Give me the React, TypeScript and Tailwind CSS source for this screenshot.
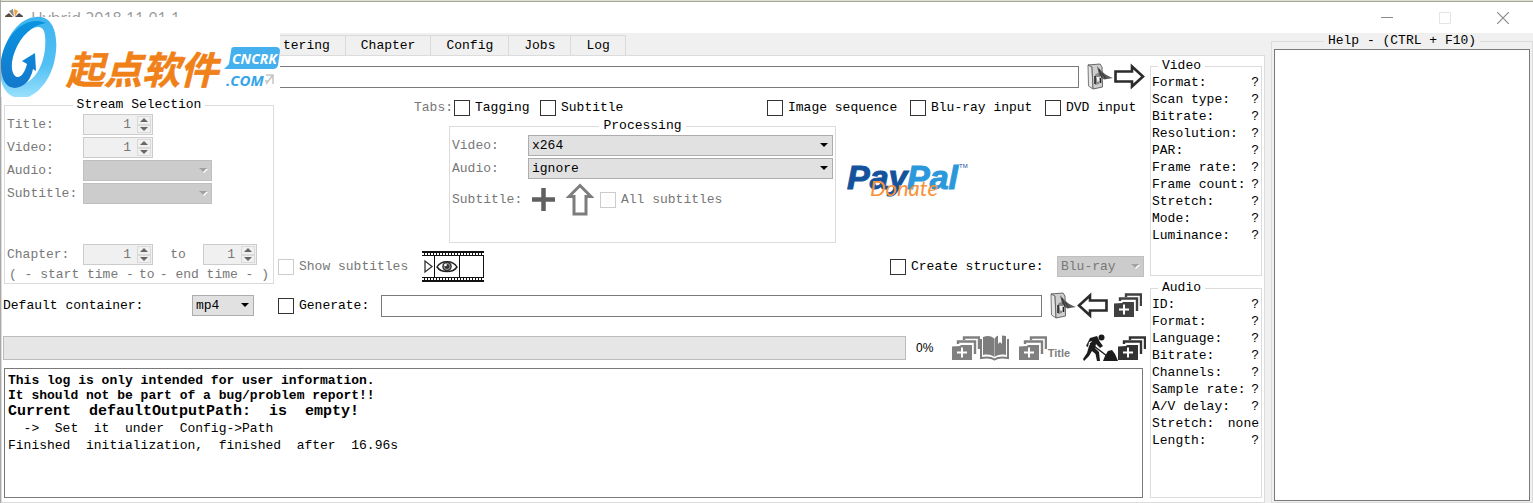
import type { ReactNode } from 'react'
import clsx from 'clsx'

const TABS = ['Chapter', 'Config', 'Jobs', 'Log']

const VIDEO_INFO = [
  ['Format:', '?'],
  ['Scan type:', '?'],
  ['Bitrate:', '?'],
  ['Resolution:', '?'],
  ['PAR:', '?'],
  ['Frame rate:', '?'],
  ['Frame count:', '?'],
  ['Stretch:', '?'],
  ['Mode:', '?'],
  ['Luminance:', '?'],
]

const AUDIO_INFO = [
  ['ID:', '?'],
  ['Format:', '?'],
  ['Language:', '?'],
  ['Bitrate:', '?'],
  ['Channels:', '?'],
  ['Sample rate:', '?'],
  ['A/V delay:', '?'],
  ['Stretch:', 'none'],
  ['Length:', '?'],
]

/* ---------- icons ---------- */

function BrowseIcon() {
  return (
    <svg width="27" height="27" viewBox="0 0 27 27" aria-hidden="true">
      <path d="M1 2 5 3 6 26 1.500 23Z" fill="#e6e6e6" stroke="#777" />
      <path d="M1 2 13 1 15 4 15.500 24 6 26 5 4Z" fill="#cfcfcf" stroke="#666" />
      <path d="M8 12c2-3 5-2 5 1l-1 8-4 1Z" fill="#8a8a8a" />
      <path d="M9.500 14h3v4l-2 1Z" fill="#f4f4f4" />
      <path d="M8 13v8M13.500 15v5" stroke="#222" strokeWidth="1.500" />
      <path d="M10 3C13 7 19 13 26 15L17 16.500 12 12Z" fill="#5a5a5a" />
      <path d="M12 6 15 15M15 10 19 16" stroke="#333" strokeWidth="1" />
    </svg>
  )
}

function ArrowIcon({ left = false }: { left?: boolean }) {
  return (
    <svg width="31" height="27" viewBox="0 0 31 27" aria-hidden="true" className={clsx(left && 'rotate-180')}>
      <path d="M1.500 8.500H18V3.500L29 13.500 18 23.500V18.500H1.500Z" fill="#fff" stroke="#2b2b2b" strokeWidth="2.600" />
    </svg>
  )
}

function StackIcon({ color = '#404040' }: { color?: string }) {
  return (
    <svg width="28" height="25" viewBox="0 0 28 25" aria-hidden="true">
      <path d="M0 10.500 8 10 9 9H20V24H0Z" fill={color} />
      <path d="M10 11.500v10M5 16.500h10" stroke="#fff" strokeWidth="2" />
      <path d="M6 8V5.500H23V18M12 4V1.500H27V13" fill="none" stroke={color} strokeWidth="2.400" />
    </svg>
  )
}

function BookIcon() {
  return (
    <svg width="29" height="26" viewBox="0 0 29 26" aria-hidden="true">
      <path d="M3 2C8 0 12 1 14.500 4 15.500 2 16.500 1 18 .8V9L20 7 22 9V.5L26 1V20C21 19 17 20 14.500 22 12 20 8 19 3 20Z" fill="#7d7d7d" />
      <path d="M1 4V23C7 22 11 22 14.500 24.500 18 22 22 22 28 23V4" fill="none" stroke="#7d7d7d" strokeWidth="2" />
      <path d="M14.500 4V22" stroke="#b0b0b0" strokeWidth="1" />
    </svg>
  )
}

function DiggerIcon() {
  return (
    <svg width="35" height="29" viewBox="0 0 35 29" aria-hidden="true">
      <circle cx="18.500" cy="3.500" r="3" fill="#1c1c1c" />
      <path d="M7 4 14 2 17 8 20 12 17 14 13 10 12 14 16 18 17 27H14L12.500 20 9 17 6 22 1 27 0 25 4 19 6 12 9 7 6 8 5 13 3 12Z" fill="#1c1c1c" />
      <path d="M7 9 24 22" stroke="#1c1c1c" strokeWidth="1.400" />
      <path d="M20 27 22 22 25 17 29 16 32 20 35 27Z" fill="#1c1c1c" />
    </svg>
  )
}

function FilmIcon() {
  return (
    <svg width="62" height="31" viewBox="0 0 62 31" aria-hidden="true">
      <rect width="62" height="31" fill="#111" />
      <path d="M0 3H62M0 28H62" stroke="#fff" strokeWidth="2" strokeDasharray="2 1" />
      <path d="M0 5H12V26H0ZM13 5H37V26H13ZM38 5H61V26H38Z" fill="#fff" />
      <path d="M3 10V21L10 15.500Z" fill="#fff" stroke="#333" strokeWidth="1.300" />
      <path d="M15 16C19 9 31 9 35 16 31 22 19 22 15 16Z" fill="#fff" stroke="#222" strokeWidth="1.500" />
      <circle cx="25" cy="15.500" r="4.800" fill="#333" />
      <circle cx="25" cy="15.500" r="3" fill="none" stroke="#bbb" strokeWidth=".8" />
      <circle cx="23.500" cy="14" r="1.300" fill="#fff" />
    </svg>
  )
}

function PayPalLogo() {
  return (
    <svg width="124" height="52" viewBox="0 -8 124 52" aria-hidden="true">
      <g fontFamily="Liberation Sans, sans-serif" fontWeight="700" fontStyle="italic" fontSize="34" strokeWidth="1">
        <text x="1" y="26" fill="#14529c" stroke="#14529c">Pay</text>
        <text x="61" y="26" fill="#2b98dc" stroke="#2b98dc">Pal</text>
      </g>
      <text x="113" y="5" fontFamily="Liberation Sans, sans-serif" fontSize="6" fill="#14529c">TM</text>
      <text x="24" y="33" fontFamily="Lato, sans-serif" fontStyle="italic" fontSize="22" fill="#f7923a">Donate</text>
    </svg>
  )
}

/* ---------- controls ---------- */

function IconButton({ label, disabled, children }: { label: string; disabled?: boolean; children: ReactNode }) {
  return (
    <button type="button" aria-label={label} disabled={disabled} className="flex shrink-0 items-center">
      {children}
    </button>
  )
}

function Group({ title, align = 'center', className, children }: {
  title: string
  align?: 'center' | 'left'
  className?: string
  children: ReactNode
}) {
  return (
    <fieldset className={clsx('min-w-0 border border-[#dcdcdc]', className)}>
      <legend className={clsx('px-1 leading-4 text-black', align === 'center' ? 'mx-auto' : 'ml-[7px]')}>{title}</legend>
      {children}
    </fieldset>
  )
}

function Check({ label, disabled, className }: { label: string; disabled?: boolean; className?: string }) {
  return (
    <label className={clsx('flex shrink-0 items-center gap-[5px] whitespace-nowrap', disabled && 'text-[#787878]', className)}>
      <input
        type="checkbox"
        disabled={disabled}
        className="size-4 shrink-0 appearance-none border border-[#333] bg-white checked:bg-[#333] disabled:border-[#ccc]"
      />
      {label}
    </label>
  )
}

function Select({ id, label, value, disabled, className }: {
  id: string
  label?: string
  value: string
  disabled?: boolean
  className?: string
}) {
  return (
    <div className={clsx('relative h-[21px]', className)}>
      <select
        id={id}
        aria-label={label}
        disabled={disabled}
        className="block size-full appearance-none border border-[#adadad] bg-[#e1e1e1] pl-[3px] text-black disabled:border-[#bfbfbf] disabled:bg-[#ccc] disabled:text-[#787878] disabled:opacity-100"
      >
        <option>{value}</option>
      </select>
      <svg width="9" height="6" viewBox="0 0 9 6" aria-hidden="true" className="pointer-events-none absolute top-2 right-1">
        {disabled && <path d="M1 1H9L5 5Z" fill="#fff" />}
        <path d="M0 0H8L4 4Z" fill={disabled ? '#a0a0a0' : '#000'} />
      </svg>
    </div>
  )
}

function Spinner({ id, label, className }: { id: string; label?: string; className?: string }) {
  return (
    <div className={clsx('flex h-[21px] shrink-0 border border-[#ccc] bg-[#f0f0f0]', className)}>
      <input
        id={id}
        aria-label={label}
        type="number"
        defaultValue={1}
        disabled
        className="min-w-0 flex-1 bg-transparent pr-[6px] text-right text-[#787878] [appearance:textfield] [&::-webkit-inner-spin-button]:appearance-none"
      />
      <div className="flex w-[15px] flex-col py-px pr-px">
        {['M0 4H8L4 0Z', 'M0 0H8L4 4Z'].map((d, i) => (
          <button
            key={d}
            type="button"
            disabled
            aria-label={i === 0 ? 'Increase' : 'Decrease'}
            className="flex flex-1 items-center justify-center border border-[#dadada]"
          >
            <svg width="8" height="4" viewBox="0 0 8 4" aria-hidden="true">
              <path d={d} fill="#666" />
            </svg>
          </button>
        ))}
      </div>
    </div>
  )
}

function Info({ title, rows }: { title: string; rows: string[][] }) {
  return (
    <Group title={title} align="left" className="flex-1">
      <dl className="pr-[2px] pl-px leading-[17px]">
        {rows.map(([name, value]) => (
          <div key={name} className="flex justify-between whitespace-nowrap">
            <dt>{name}</dt>
            <dd>{value}</dd>
          </div>
        ))}
      </dl>
    </Group>
  )
}

/* ---------- window parts ---------- */

function TitleBar() {
  return (
    <header className="flex h-[31px] shrink-0 items-center bg-white pr-6 pl-1">
      <svg width="18" height="20" viewBox="0 0 18 20" aria-hidden="true">
        <path d="M0 8 4 5 8 9 6 12 1 13Z" fill="#5c4a3a" />
        <path d="M4 3 8 1 9 9Z" fill="#8b8b8b" />
        <path d="M9 1 13 3 10 9Z" fill="#f0a030" />
        <path d="M18 8 14 5 10 9 12 12 17 13Z" fill="#4b4b55" />
      </svg>
      <h1 className="ml-2 font-['Open_Sans',sans-serif] text-base leading-5 text-[#999]">Hybrid 2018.11.01.1</h1>
      <div className="ml-auto flex items-center gap-[46px] text-[#8a8a8a]">
        <button type="button" aria-label="Minimize">
          <svg width="12" height="12" viewBox="0 0 12 12" className="block"><path d="M0 5.500H12" stroke="currentColor" /></svg>
        </button>
        <button type="button" aria-label="Maximize" disabled>
          <svg width="12" height="12" viewBox="0 0 12 12" className="block"><path d="M.5.5h11v11H.5Z" fill="none" stroke="#e4e4e4" /></svg>
        </button>
        <button type="button" aria-label="Close">
          <svg width="12" height="12" viewBox="0 0 12 12" className="block"><path d="M0 0 12 12M12 0 0 12" stroke="currentColor" strokeWidth="1.200" /></svg>
        </button>
      </div>
    </header>
  )
}

// Site badge floating over the top left corner of the window.
function SiteBadge() {
  return (
    <svg width="280" height="82" viewBox="0 0 280 82" className="absolute top-[15px] -left-px z-10" role="img" aria-label="起点软件 CNCRK.COM">
      <defs>
        <linearGradient id="ring" x1="0" y1="0" x2="0" y2="1">
          <stop offset="0" stopColor="#3fb4ee" />
          <stop offset=".6" stopColor="#52c0f4" />
          <stop offset="1" stopColor="#98e0fd" />
        </linearGradient>
        <linearGradient id="swirl" x1="0" y1="0" x2="0" y2="1">
          <stop offset="0" stopColor="#0a94e0" />
          <stop offset="1" stopColor="#1478cc" />
        </linearGradient>
      </defs>
      <rect y="2" width="280" height="80" fill="#fff" />
      <path fillRule="evenodd" d="M36 2C51 0 58 16 56 36 54 58 43 76 28 82H14C4 78 0 68 0 54 3 24 18 3 36 2ZM38 12C26 13 15 29 12 46 9 62 14 69 22 69 34 67 43 52 45 34 46 20 45 12 38 12Z" fill="url(#ring)" />
      <path d="M46 8C24-1 4 22 1 46 0 64 6 73 15 73 25 72 31 64 33 54L36 56 35 38 22 46 27 49C25 57 21 63 17 62 11 60 10 48 15 36 21 21 32 10 46 8Z" fill="url(#swirl)" />
      <text x="66" y="69" fontFamily="Noto Sans CJK SC, sans-serif" fontWeight="700" fontStyle="italic" fontSize="38" fill="#f08018" stroke="#f08018" strokeWidth=".6">起点软件</text>
      <path d="M234 32H276Q280 32 280 36L278 50Q277 54 273 54H224L229 49 231 36Q231 32 234 32Z" fill="#45b0ee" />
      <g fontFamily="Open Sans, sans-serif" fontWeight="700" fontStyle="italic">
        <text x="232" y="49" fontSize="14" fill="#fff">CNCRK</text>
        <text x="226" y="71" fontSize="15" fill="#35a4e8">.COM</text>
      </g>
      <path d="M266 60H273V69M273 60 266 69M265 66H269" fill="none" stroke="#c4c4c4" strokeWidth="1.500" />
    </svg>
  )
}

function StreamSelection() {
  return (
    <Group title="Stream Selection" className="w-[270px] shrink-0 text-[#787878]">
      <div className="grid grid-cols-[76px_1fr] items-center gap-y-[2px] pt-px pl-[2px]">
        <label htmlFor="title">Title:</label>
        <Spinner id="title" className="w-[70px]" />
        <label htmlFor="video">Video:</label>
        <Spinner id="video" className="w-[70px]" />
        <label htmlFor="audio">Audio:</label>
        <Select id="audio" value="" disabled className="w-[129px]" />
        <label htmlFor="subtitle">Subtitle:</label>
        <Select id="subtitle" value="" disabled className="w-[129px]" />
      </div>
      <div className="mt-10 flex items-center pl-[2px]">
        <label htmlFor="chapter" className="w-[76px]">Chapter:</label>
        <Spinner id="chapter" className="w-[70px]" />
        <span className="w-[50px] text-center">to</span>
        <Spinner id="chapterEnd" label="Last chapter" className="w-[54px]" />
      </div>
      <div className="mt-[2px] flex justify-between px-1 leading-4">
        <span>( - start time -</span>
        <span>to</span>
        <span>- end time - )</span>
      </div>
    </Group>
  )
}

function Processing() {
  return (
    <Group title="Processing" className="h-[125px] w-[387px] text-[#787878]">
      <div className="grid grid-cols-[76px_1fr] items-center gap-y-[2px] pt-px pr-[2px] pl-[2px]">
        <label htmlFor="videoCodec">Video:</label>
        <Select id="videoCodec" value="x264" />
        <label htmlFor="audioCodec">Audio:</label>
        <Select id="audioCodec" value="ignore" />
      </div>
      <div className="mt-1 flex items-center pl-[2px]">
        <span className="w-20">Subtitle:</span>
        <IconButton label="Add subtitle" disabled>
          <svg width="23" height="23" viewBox="0 0 23 23" aria-hidden="true">
            <path d="M11.500 0V23M0 11.500H23" stroke="#606060" strokeWidth="4.500" />
          </svg>
        </IconButton>
        <div className="mr-[6px] ml-[11px] flex">
          <IconButton label="Load subtitle" disabled>
            <svg width="28" height="33" viewBox="0 0 28 33" aria-hidden="true">
              <path d="M14 2.500 25 13.500H20V31H8V13.500H3Z" fill="#fff" stroke="#7d7d7d" strokeWidth="3" />
            </svg>
          </IconButton>
        </div>
        <Check label="All subtitles" disabled />
      </div>
    </Group>
  )
}

function Log() {
  return (
    <section aria-label="Log" className="mr-[3px] ml-px min-h-0 flex-1 border border-[#7a7a7a] bg-white px-[3px] py-1 leading-[17px] whitespace-pre">
      <p className="leading-[15px] font-bold">This log is only intended for user information.</p>
      <p className="leading-[15px] font-bold">It should not be part of a bug/problem report!!</p>
      <p className="text-[15px] leading-[17px] font-bold">{'Current  defaultOutputPath:  is  empty!'}</p>
      <p>{'  ->  Set  it  under  Config->Path'}</p>
      <p>{'Finished  initialization,  finished  after  16.96s'}</p>
    </section>
  )
}

function BasePage() {
  return (
    <div className="flex min-w-0 flex-1 flex-col pt-[7px] pl-px">
      <div className="flex items-center pr-px">
        <input aria-label="Input" className="mr-2 h-[22px] min-w-0 flex-1 border border-[#7a7a7a] bg-white px-1" />
        <IconButton label="Open input"><BrowseIcon /></IconButton>
        <IconButton label="Next"><ArrowIcon /></IconButton>
      </div>

      <div className="mt-[7px] flex pl-px">
        <StreamSelection />
        <div className="flex min-w-0 flex-1 flex-col pt-px pl-1">
          <div className="flex h-5 items-center">
            <span className="ml-[130px] w-[45px] text-right text-[#787878]">Tabs:</span>
            <Check label="Tagging" className="w-[87px] pl-px" />
            <Check label="Subtitle" />
            <div className="ml-auto flex">
              <Check label="Image sequence" className="w-[143px]" />
              <Check label="Blu-ray input" className="w-[135px]" />
              <Check label="DVD input" className="w-[101px]" />
            </div>
          </div>
          <div className="flex items-center pl-[171px]">
            <Processing />
            <button type="button" aria-label="Donate with PayPal" className="ml-[10px]"><PayPalLogo /></button>
          </div>
          <div className="mt-auto mb-[2px] flex items-center">
            <Check label="Show subtitles" disabled className="w-[144px]" />
            <IconButton label="Preview" disabled><FilmIcon /></IconButton>
            <Check label="Create structure:" className="ml-auto w-[167px]" />
            <Select id="structure" label="Structure" value="Blu-ray" disabled className="mr-[2px] w-[87px]" />
          </div>
        </div>
      </div>

      <div className="mt-2 flex items-center">
        <label htmlFor="container" className="w-[189px]">Default container:</label>
        <Select id="container" value="mp4" className="mr-6 w-[62px]" />
        <Check label="Generate:" className="w-[103px]" />
        <input aria-label="Output" className="mr-2 h-[22px] min-w-0 flex-1 border border-[#7a7a7a] bg-white px-1" />
        <IconButton label="Choose output"><BrowseIcon /></IconButton>
        <IconButton label="Back"><ArrowIcon left /></IconButton>
        <div className="mr-1 ml-[6px] flex">
          <IconButton label="Add to queue"><StackIcon /></IconButton>
        </div>
      </div>

      <div className="mt-[14px] mb-[5px] flex h-[30px] items-center">
        <div role="progressbar" aria-label="Progress" aria-valuenow={0} className="h-6 flex-1 border border-[#bcbcbc] bg-[#e6e6e6]" />
        <span className="ml-[10px] w-9 font-['Liberation_Sans',sans-serif] text-xs">0%</span>
        <div className="flex">
          <IconButton label="Add chapters" disabled><StackIcon color="#808080" /><BookIcon /></IconButton>
        </div>
        <div className="ml-[10px] flex">
          <IconButton label="Add titles" disabled>
            <StackIcon color="#808080" />
            <span className="w-6 pt-[10px] font-['Liberation_Sans',sans-serif] text-[11px] leading-4 font-bold text-[#808080]">Title</span>
          </IconButton>
        </div>
        <div className="ml-3 flex">
          <IconButton label="Start job"><DiggerIcon /><StackIcon color="#333" /></IconButton>
        </div>
      </div>

      <Log />
    </div>
  )
}

export default function App() {
  return (
    <div className="relative flex h-screen flex-col overflow-hidden border-l border-[#a8a8a8] bg-[#f0f0f0] font-['Liberation_Mono',monospace] text-[13px] leading-4 text-black">
      <div className="h-[2px] shrink-0 border-b border-[#a5a69a] bg-[#dfe0cf]" />
      <SiteBadge />
      <TitleBar />

      <div className="flex min-h-0 flex-1">
        <main className="flex min-w-0 flex-1 flex-col pt-[2px]">
          <nav className="flex h-5 pl-[267px]">
            {['tering', ...TABS].map((tab) => (
              <a key={tab} href={`#${tab.toLowerCase()}`} className="border-t border-r border-[#dadada] px-[15px] pt-[2px]">
                {tab}
              </a>
            ))}
          </nav>
          <div className="flex min-h-0 flex-1 border border-[#dcdcdc] bg-white pb-1">
            <BasePage />
            <div className="mr-[2px] ml-1 flex w-28 shrink-0 flex-col gap-1 pt-[2px]">
              <Info title="Video" rows={VIDEO_INFO} />
              <Info title="Audio" rows={AUDIO_INFO} />
            </div>
          </div>
        </main>

        <aside className="ml-[6px] flex w-[262px] shrink-0 flex-col">
          <Group title="Help - (CTRL + F10)" className="flex-1 px-[2px] pb-px">
            <div className="h-full border border-[#7a7a7a] bg-white" />
          </Group>
        </aside>
      </div>
    </div>
  )
}
